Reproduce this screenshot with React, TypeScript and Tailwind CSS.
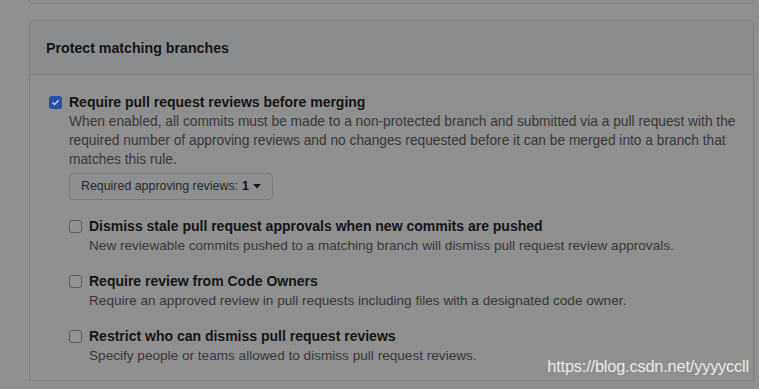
import React from "react";

type Option = {
  title: string
  desc: string
}

const subOptions: Option[] = [
  {
    title: "Dismiss stale pull request approvals when new commits are pushed",
    desc: "New reviewable commits pushed to a matching branch will dismiss pull request review approvals.",
  },
  {
    title: "Require review from Code Owners",
    desc: "Require an approved review in pull requests including files with a designated code owner.",
  },
  {
    title: "Restrict who can dismiss pull request reviews",
    desc: "Specify people or teams allowed to dismiss pull request reviews.",
  },
]

function Box({ checked }: { checked?: boolean }) {
  if (checked) {
    return (
      <span className="mt-[3px] flex h-[13px] w-[13px] shrink-0 items-center justify-center rounded-[3px] bg-[#2451a1]">
        <svg viewBox="0 0 12 12" className="h-[9px] w-[9px]">
          <path d="M2.5 6.3l2.3 2.3 4.7-5" fill="none" stroke="#c9cfdb" strokeWidth="1.8" strokeLinecap="round" strokeLinejoin="round" />
        </svg>
      </span>
    )
  }
  return <span className="mt-[3px] h-[13px] w-[13px] shrink-0 rounded-[3px] border border-[#5b5c5e] bg-[#929292]" />
}

export default function App() {
  return (
    <div className="h-[389px] w-[759px] overflow-hidden bg-[#8f8f8f] font-['Liberation_Sans',Arial,sans-serif] text-[#151617]">
      <div className="ml-[29px] mr-[5px] h-[4px] rounded-b-[5px] border-x border-b border-[#7e7f81]" />

      <div className="ml-[29px] mr-[5px] mt-[16px] rounded-t-[5px] border border-[#7e7f81]">
        <div className="flex h-[54px] items-center rounded-t-[5px] border-b border-[#7e7f81] bg-[#8b8c8e] pl-[16px] pt-[3px]">
          <h2 className="text-[14.2px] font-bold">Protect matching branches</h2>
        </div>

        <div className="relative pb-[15px] pl-[19px] pr-[8px] pt-[18px]">
          <div className="flex gap-[7px]">
            <Box checked />
            <div>
              <div className="text-[14px] font-bold leading-[18px]">Require pull request reviews before merging</div>
              <p className="mt-[1px] whitespace-nowrap text-[13.75px] leading-[19px] text-[#38393b]">
                When enabled, all commits must be made to a non-protected branch and submitted via a pull request with the
                <br />
                required number of approving reviews and no changes requested before it can be merged into a branch that
                <br />
                matches this rule.
              </p>
              <button className="mt-[4px] flex h-[27px] items-center gap-[4px] rounded-[4px] border border-[#7a7b7d] bg-[#8d8e90] px-[11px] text-[12.4px] text-[#2a2b2d]">
                Required approving reviews: <span className="font-bold text-[#151617]">1</span>
                <svg viewBox="0 0 8 5" className="h-[5px] w-[8px]"><path d="M0 0h8L4 4.5z" fill="#151617" /></svg>
              </button>

              <div className="mt-[17px] flex flex-col gap-[17px]">
                {subOptions.map((o) => (
                  <div key={o.title} className="flex gap-[7px]">
                    <Box />
                    <div>
                      <div className="text-[14px] font-bold leading-[18px]">{o.title}</div>
                      <p className="mt-[1px] text-[13.6px] leading-[19px] text-[#38393b]">{o.desc}</p>
                    </div>
                  </div>
                ))}
              </div>
            </div>
          </div>
          <span className="absolute bottom-[1px] right-[4px] text-[16.4px] tracking-[-0.2px] text-[#e8e8e8]">https://blog.csdn.net/yyyyccll</span>
        </div>
      </div>
    </div>
  )
}
